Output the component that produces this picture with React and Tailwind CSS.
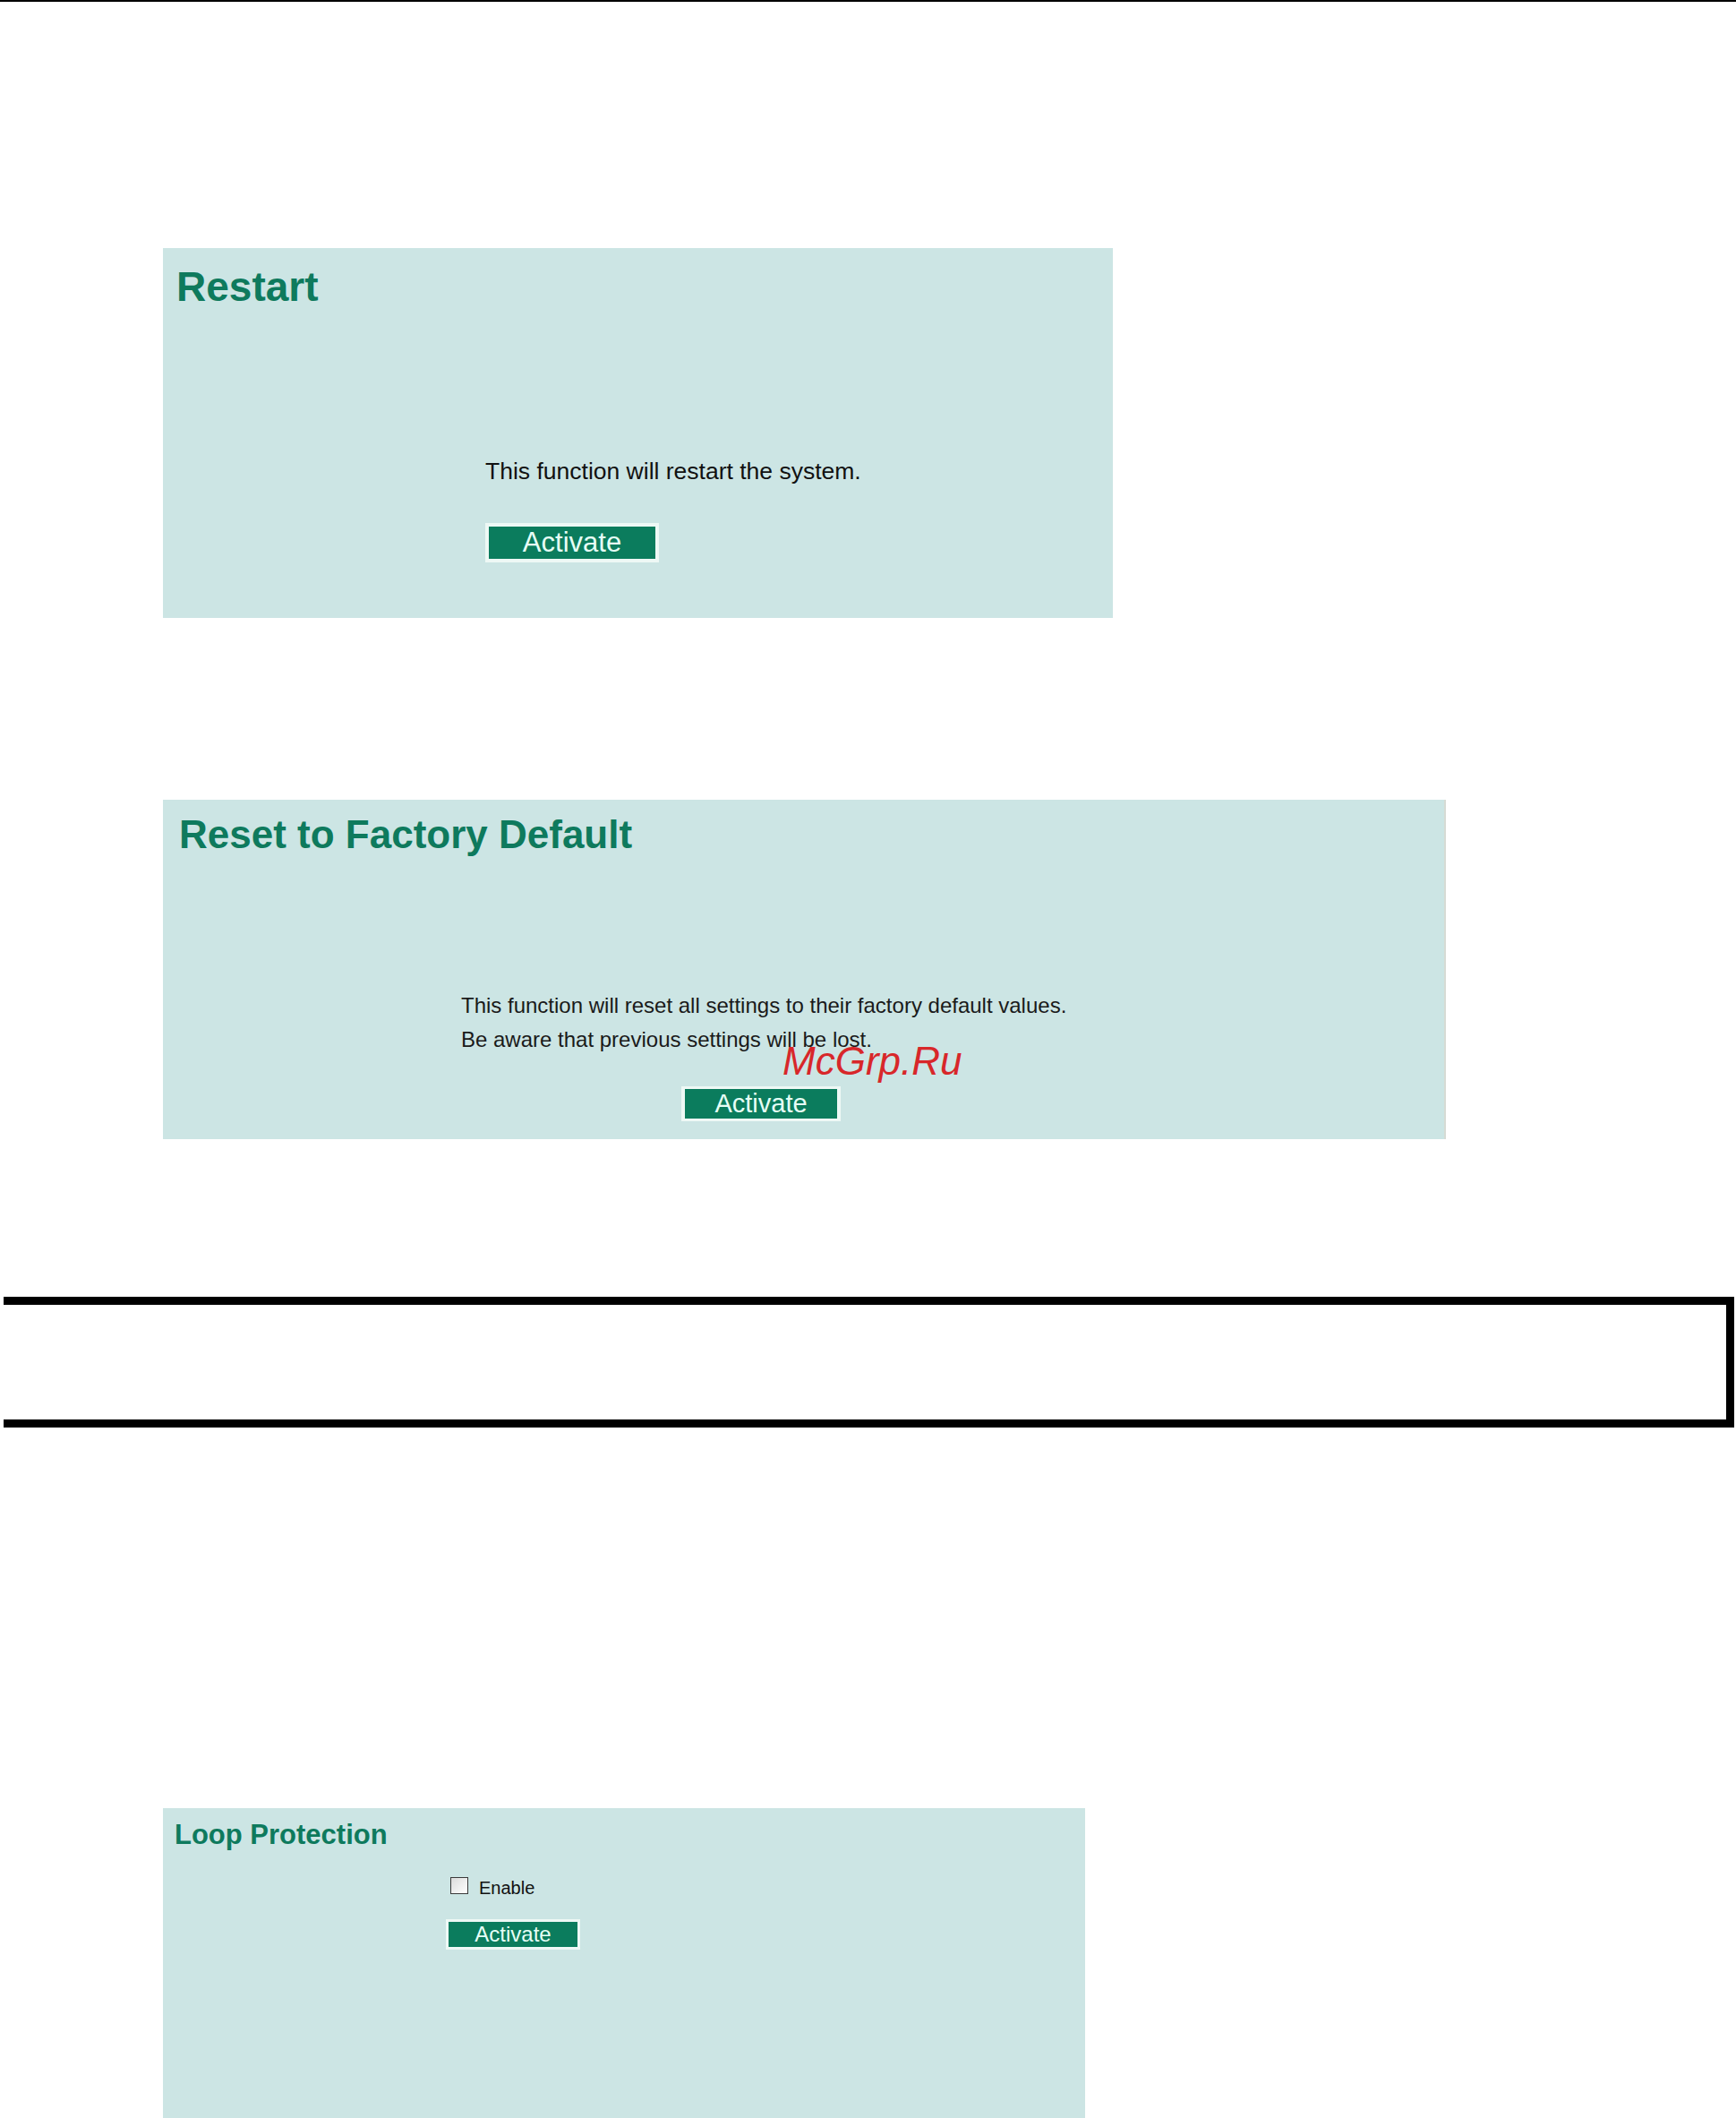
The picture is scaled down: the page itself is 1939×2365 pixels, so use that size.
import React from "react";

// Green "Activate" button used on every panel
function ActivateButton({ className, textClass }) {
  return (
    <button
      type="button"
      className={`flex items-center justify-center bg-[#0b7c5d] border-solid border-[#eef8f5] text-[#e6fff6] leading-none ${className}`}
    >
      <span className={textClass}>Activate</span>
    </button>
  );
}

export default function App() {
  return (
    <div className="w-[1939px] h-[2365px] overflow-hidden bg-white font-['Liberation_Sans',Arial,sans-serif]">
      {/* Page top rule */}
      <div className="h-[2px] w-full bg-black" />

      {/* Restart */}
      <div className="mt-[275px] ml-[182px] w-[1061px] h-[413px] bg-[#cce5e4] pt-[20px] pl-[15px]">
        <h1 className="text-[46px] leading-none font-bold text-[#0e7a5d]">Restart</h1>
        <div className="mt-[170px] pl-[345px]">
          <p className="text-[26.5px] leading-none text-[#111]">This function will restart the system.</p>
          <ActivateButton
            className="mt-[44px] w-[194px] h-[44px] border-[4px]"
            textClass="text-[31px]"
          />
        </div>
      </div>

      {/* Reset to Factory Default */}
      <div className="relative mt-[203px] ml-[182px] w-[1433px] h-[379px] bg-[#cce5e4] border-r-2 border-[#d6dbd4] pt-[17px] pl-[18px]">
        <h1 className="text-[44px] leading-none font-bold text-[#0e7a5d]">Reset to Factory Default</h1>
        <div className="mt-[150px] pl-[315px] text-[24px] leading-[38px] text-[#1a1a1a]">
          <p>This function will reset all settings to their factory default values.</p>
          <p>Be aware that previous settings will be lost.</p>
        </div>
        <ActivateButton
          className="mt-[33px] ml-[561px] w-[178px] h-[39px] border-x-[4px] border-y-[3px]"
          textClass="text-[29px]"
        />
        {/* watermark */}
        <span className="absolute left-[692px] top-[270px] text-[44px] leading-none italic text-[#d8272a]">
          McGrp.Ru
        </span>
      </div>

      {/* Boxed area */}
      <div className="mt-[176px] ml-[4px] w-[1933px] h-[146px] border-t-[9px] border-r-[9px] border-b-[9px] border-black" />

      {/* Loop Protection */}
      <div className="mt-[425px] ml-[182px] w-[1030px] h-[346px] bg-[#cce5e4] pt-[14px] pl-[13px]">
        <h2 className="text-[31px] leading-none font-bold text-[#0e7a5d]">Loop Protection</h2>
        <div className="mt-[32px] pl-[308px]">
          <label className="flex items-start gap-[12px]">
            <span className="block w-[20px] h-[19px] border border-[#3a3a3a] bg-gradient-to-br from-[#dcdcdc] to-white" />
            <span className="mt-[2px] text-[20px] leading-none text-[#111]">Enable</span>
          </label>
          <ActivateButton
            className="mt-[25px] -ml-[5px] w-[150px] h-[34px] border-[3px]"
            textClass="text-[24px]"
          />
        </div>
      </div>
    </div>
  );
}
